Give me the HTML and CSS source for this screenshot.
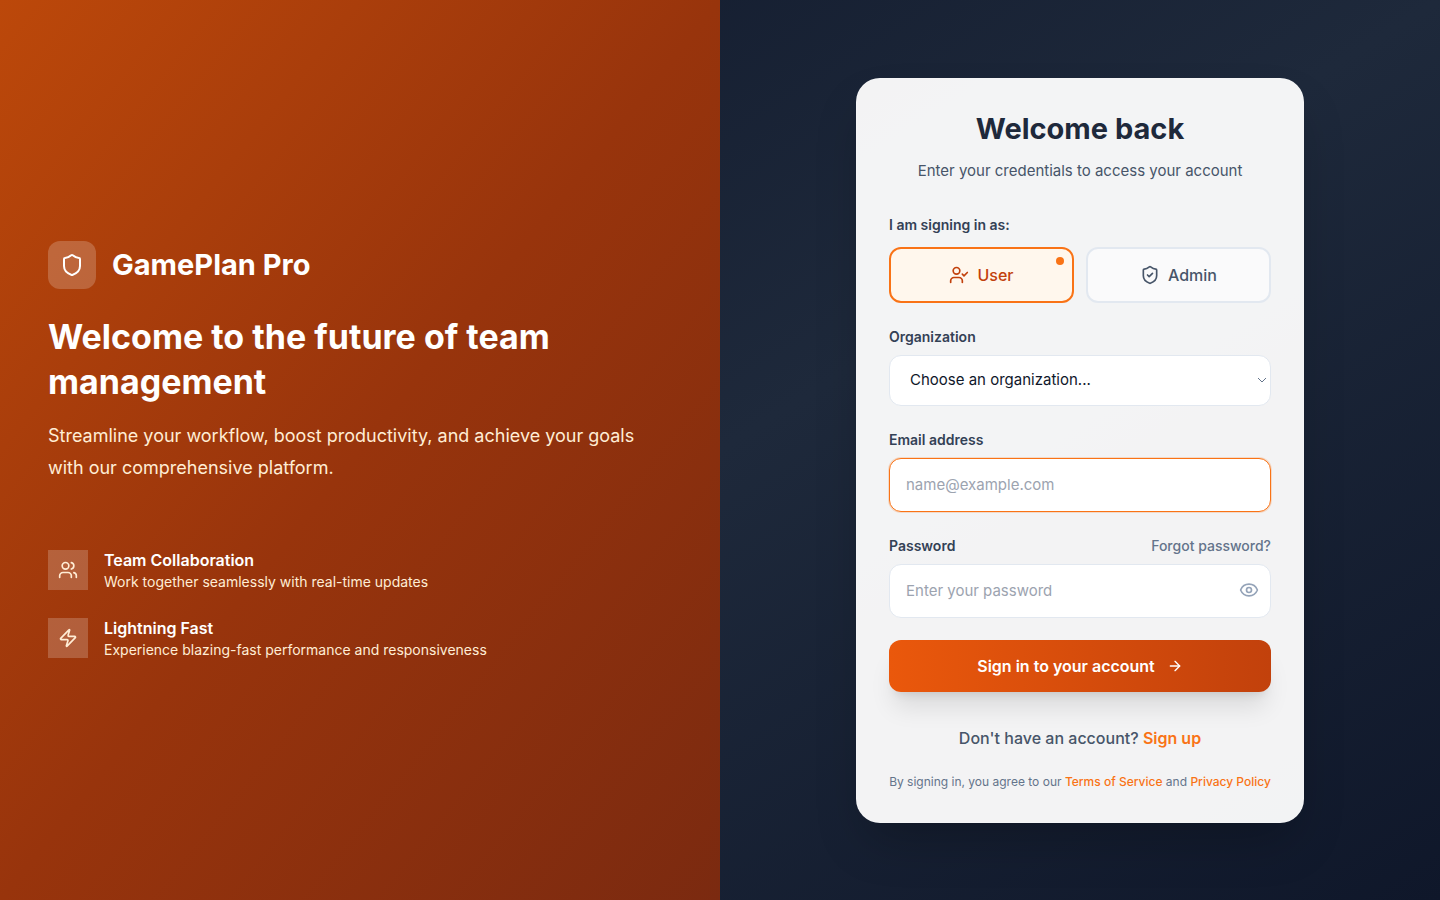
FILE: index.html
```html
<!DOCTYPE html>
<html lang="en">
<head>
<meta charset="utf-8">
<meta name="viewport" content="width=device-width, initial-scale=1">
<title>GamePlan Pro - Sign in</title>
<link rel="stylesheet" href="styles.css">
</head>
<body>
<div class="page">
  <section class="intro">
    <div class="brand">
      <span class="brand-mark">
        <svg class="icon icon-24" viewBox="0 0 24 24" aria-hidden="true"><path d="M20 13c0 5-3.5 7.5-7.66 8.95a1 1 0 0 1-.67-.01C7.5 20.5 4 18 4 13V6a1 1 0 0 1 1-1c2 0 4.500-1.200 6.240-2.720a1.170 1.170 0 0 1 1.520 0C14.510 3.810 17 5 19 5a1 1 0 0 1 1 1z"/></svg>
      </span>
      <h1 class="brand-name">GamePlan Pro</h1>
    </div>
    <h2 class="headline">Welcome to the future of team management</h2>
    <p class="lead">Streamline your workflow, boost productivity, and achieve your goals with our comprehensive platform.</p>
    <ul class="features">
      <li class="feature">
        <span class="feature-mark">
          <svg class="icon icon-20" viewBox="0 0 24 24" aria-hidden="true"><path d="M16 21v-2a4 4 0 0 0-4-4H6a4 4 0 0 0-4 4v2"/><circle cx="9" cy="7" r="4"/><path d="M22 21v-2a4 4 0 0 0-3-3.870"/><path d="M16 3.130a4 4 0 0 1 0 7.750"/></svg>
        </span>
        <div>
          <h3 class="feature-title">Team Collaboration</h3>
          <p class="feature-text">Work together seamlessly with real-time updates</p>
        </div>
      </li>
      <li class="feature">
        <span class="feature-mark">
          <svg class="icon icon-20" viewBox="0 0 24 24" aria-hidden="true"><path d="M4 14a1 1 0 0 1-.78-1.630l9.900-10.200a.5.5 0 0 1 .86.460l-1.920 6.020A1 1 0 0 0 13 10h7a1 1 0 0 1 .78 1.630l-9.900 10.200a.5.5 0 0 1-.86-.460l1.920-6.020A1 1 0 0 0 11 14z"/></svg>
        </span>
        <div>
          <h3 class="feature-title">Lightning Fast</h3>
          <p class="feature-text">Experience blazing-fast performance and responsiveness</p>
        </div>
      </li>
    </ul>
  </section>
  <main class="auth">
    <div class="card">
      <header class="card-header">
        <h2 class="card-title">Welcome back</h2>
        <p class="card-subtitle">Enter your credentials to access your account</p>
      </header>
      <form class="form">
        <div class="field role-field" role="group" aria-labelledby="role-label">
          <span class="label" id="role-label">I am signing in as:</span>
          <div class="roles">
            <button type="button" class="role role-active" aria-pressed="true">
              <svg class="icon icon-20" viewBox="0 0 24 24" aria-hidden="true"><path d="m16 11 2 2 4-4"/><path d="M16 21v-2a4 4 0 0 0-4-4H6a4 4 0 0 0-4 4v2"/><circle cx="9" cy="7" r="4"/></svg>
              User
              <span class="role-dot"></span>
            </button>
            <button type="button" class="role" aria-pressed="false">
              <svg class="icon icon-20" viewBox="0 0 24 24" aria-hidden="true"><path d="M20 13c0 5-3.500 7.500-7.660 8.950a1 1 0 0 1-.67-.01C7.500 20.500 4 18 4 13V6a1 1 0 0 1 1-1c2 0 4.500-1.200 6.240-2.720a1.170 1.170 0 0 1 1.520 0C14.510 3.810 17 5 19 5a1 1 0 0 1 1 1z"/><path d="m9 12 2 2 4-4"/></svg>
              Admin
            </button>
          </div>
        </div>
        <div class="field">
          <label class="label" for="org">Organization</label>
          <div class="select-wrap">
            <select class="control select" id="org"><option>Choose an organization...</option></select>
            <svg class="chevron" viewBox="0 0 10 6" aria-hidden="true"><path d="M1 1l4 4 4-4"/></svg>
          </div>
        </div>
        <div class="field">
          <label class="label" for="email">Email address</label>
          <input class="control input input-focus" id="email" type="email" placeholder="name@example.com">
        </div>
        <div class="field">
          <div class="label-row">
            <label class="label" for="password">Password</label>
            <a class="forgot" href="#">Forgot password?</a>
          </div>
          <div class="password-wrap">
            <input class="control input" id="password" type="password" placeholder="Enter your password">
            <button type="button" class="reveal" aria-label="Show password">
              <svg class="icon icon-20" viewBox="0 0 24 24" aria-hidden="true"><path d="M2.060 12.350a1 1 0 0 1 0-.7 10.750 10.750 0 0 1 19.880 0 1 1 0 0 1 0 .7 10.750 10.750 0 0 1-19.880 0"/><circle cx="12" cy="12" r="3"/></svg>
            </button>
          </div>
        </div>
        <button type="submit" class="submit">
          Sign in to your account
          <svg class="icon icon-16" viewBox="0 0 24 24" aria-hidden="true"><path d="M5 12h14"/><path d="m12 5 7 7-7 7"/></svg>
        </button>
      </form>
      <p class="signup">Don't have an account? <a class="link link-strong" href="#">Sign up</a></p>
      <p class="terms">By signing in, you agree to our <a class="link" href="#">Terms of Service</a> and <a class="link" href="#">Privacy Policy</a></p>
    </div>
  </main>
</div>
</body>
</html>
```
FILE: styles.css
```css
*, *::before, *::after { box-sizing: border-box; }
body, h1, h2, h3, p, ul { margin: 0; padding: 0; }
body {
  font-family: Inter, "Liberation Sans", sans-serif;
  font-size: 16px;
  line-height: 24px;
  color: #1e293b;
}
button, input, select { font: inherit; }
a { text-decoration: none; }

.page {
  display: grid;
  grid-template-columns: 1fr 1fr;
  min-height: 100vh;
  background: linear-gradient(to bottom right, #0f172a, #1e293b, #0f172a);
}

.icon {
  flex: none;
  fill: none;
  stroke: currentColor;
  stroke-width: 2;
  stroke-linecap: round;
  stroke-linejoin: round;
}
.icon-16 { width: 16px; height: 16px; }
.icon-20 { width: 20px; height: 20px; }
.icon-24 { width: 24px; height: 24px; }

.intro {
  display: flex;
  flex-direction: column;
  justify-content: center;
  padding: 48px;
  color: #fff;
  background: linear-gradient(to bottom right, #bc480a, #98340c, #7b2a10);
}
.brand { display: flex; align-items: center; gap: 16px; margin-bottom: 25px; }
.brand-mark {
  display: grid;
  place-items: center;
  width: 48px;
  height: 48px;
  border-radius: 12px;
  background: rgba(255, 255, 255, 0.2);
}
.brand-name { font-size: 29px; line-height: 36px; font-weight: 700; }
.headline { margin-bottom: 16px; font-size: 34px; line-height: 45px; font-weight: 700; }
.lead { font-size: 18px; line-height: 32px; color: #ffedd5; }
.features {
  display: flex;
  flex-direction: column;
  gap: 24px;
  margin-top: 64px;
  list-style: none;
}
.feature { display: flex; align-items: center; gap: 16px; }
.feature-mark {
  display: grid;
  place-items: center;
  width: 40px;
  height: 40px;
  color: #ffedd5;
  background: rgba(255, 255, 255, 0.2);
}
.feature-title { font-size: 16px; line-height: 24px; font-weight: 600; }
.feature-text { font-size: 14px; line-height: 20px; color: #ffedd5; }

.auth { display: grid; place-items: center; padding: 32px; }
.card {
  width: 100%;
  max-width: 448px;
  padding: 32px;
  border: 1px solid rgba(255, 255, 255, 0.2);
  border-radius: 24px;
  background: rgba(255, 255, 255, 0.95);
  box-shadow: 0 25px 50px -12px rgba(0, 0, 0, 0.25);
}
.card-header { margin-bottom: 32px; text-align: center; }
.card-title { margin-bottom: 12px; font-size: 29px; line-height: 36px; font-weight: 700; }
.card-subtitle { font-size: 15px; color: #475569; }

.form { display: flex; flex-direction: column; gap: 24px; }
.field { display: flex; flex-direction: column; gap: 8px; }
.role-field { gap: 12px; }
.label { font-size: 14px; line-height: 20px; font-weight: 600; color: #334155; }
.label-row { display: flex; justify-content: space-between; }
.forgot { font-size: 14px; line-height: 20px; font-weight: 500; color: #64748b; }

.roles { display: grid; grid-template-columns: 1fr 1fr; gap: 12px; }
.role {
  position: relative;
  display: flex;
  align-items: center;
  justify-content: center;
  gap: 8px;
  height: 56px;
  padding: 0;
  border: 2px solid #e2e8f0;
  border-radius: 12px;
  font-weight: 500;
  color: #475569;
  background: #fafafb;
}
.role-active { border-color: #f97316; color: #c2410c; background: #fff7ed; }
.role-dot {
  position: absolute;
  top: 8px;
  right: 8px;
  width: 8px;
  height: 8px;
  border-radius: 50%;
  background: #f97316;
}

.control {
  width: 100%;
  border: 1px solid #e2e8f0;
  border-radius: 12px;
  background: #fff;
  font-size: 15px;
  color: #0f172a;
  outline: none;
}
.input { height: 54px; padding: 0 16px; }
.input::placeholder { color: #9ca3af; }
.input-focus { border-color: #f97316; box-shadow: 0 0 0 1px rgba(249, 115, 22, 0.2); }
.select-wrap, .password-wrap { position: relative; display: flex; }
.select { height: 51px; padding: 0 20px; appearance: none; }
.chevron {
  position: absolute;
  top: 22px;
  right: 4px;
  width: 10px;
  height: 6px;
  fill: none;
  stroke: #64748b;
  pointer-events: none;
}
.password-wrap .input { padding-right: 48px; }
.reveal {
  position: absolute;
  top: 16px;
  right: 12px;
  display: flex;
  padding: 0;
  border: 0;
  color: #94a3b8;
  background: none;
}

.submit {
  display: flex;
  align-items: center;
  justify-content: center;
  gap: 12px;
  height: 52px;
  margin-top: -2px;
  padding: 0;
  border: 0;
  border-radius: 12px;
  font-weight: 600;
  color: #fff;
  background: linear-gradient(to right, #ea580c, #c2410c);
  box-shadow: 0 20px 25px -5px rgba(0, 0, 0, 0.1), 0 8px 10px -6px rgba(0, 0, 0, 0.1);
}

.signup { margin-top: 34px; text-align: center; font-weight: 500; color: #475569; }
.terms { margin-top: 24px; text-align: center; font-size: 12px; line-height: 16px; color: #64748b; }
.link { font-weight: 500; color: #f97316; }
.link-strong { font-weight: 600; }

@media (max-width: 900px) {
  .page { grid-template-columns: 1fr; }
}
```
